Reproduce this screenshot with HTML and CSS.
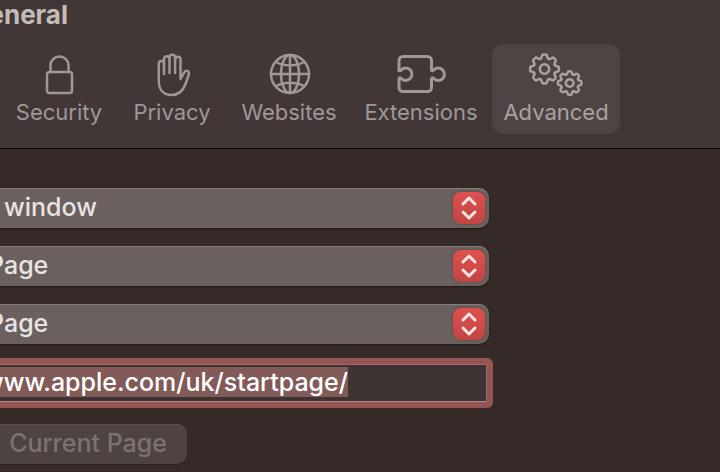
FILE: index.html
```html
<!DOCTYPE html>
<html lang="en">

<head>
    <meta charset="UTF-8">
    <meta name="viewport" content="width=device-width, initial-scale=1.0">
    <title>General</title>
    <link rel="stylesheet" href="styles.css">
</head>

<body>
    <header class="toolbar">
        <h1 class="title">General</h1>
        <nav class="tabs">
            <button class="tab" type="button">
                <svg class="icon" viewBox="0 0 60 48">
                    <rect x="18" y="22" width="25" height="21" rx="2.500" />
                    <path d="M21.500 22v-6.500a9 9 0 0 1 18 0v6.500" />
                </svg>
                <span>Security</span>
            </button>
            <button class="tab" type="button">
                <svg class="icon" viewBox="0 0 60 48">
                    <path d="M22 24V13.500a2.600 2.600 0 0 0-5.200 0V31c0 9 5 14 13 14 7 0 11-4 13.500-10.500l3.500-10c1.200-3.400-3-5-4.400-2.300L38.500 29V9.500a2.600 2.600 0 0 0-5.400 0" />
                    <path d="M22 14V9a2.700 2.700 0 0 1 5.500 0v14M27.500 9V7.500a2.700 2.700 0 0 1 5.600 0V23" />
                </svg>
                <span>Privacy</span>
            </button>
            <button class="tab" type="button">
                <svg class="icon" viewBox="0 0 60 48">
                    <circle cx="31" cy="24" r="19" />
                    <ellipse cx="31" cy="24" rx="9" ry="19" />
                    <path d="M31 5v38M12 24h38M17 12c8 4.500 20 4.500 28 0M17 36c8-4.500 20-4.500 28 0" />
                </svg>
                <span>Websites</span>
            </button>
            <button class="tab" type="button">
                <svg class="icon bold" viewBox="0 0 60 48">
                    <path d="M8 20.500V10.500a4 4 0 0 1 4-4h24.500a4 4 0 0 1 4 4v9q0 2 2 .8a6.200 6.200 0 1 1 0 8q-2-1.200-2 .8V37.500a4 4 0 0 1-4 4H12a4 4 0 0 1-4-4V29q0-2 2-.8a6.200 6.200 0 1 0 0-8q-2 1.200-2-.8" />
                </svg>
                <span>Extensions</span>
            </button>
            <button class="tab active" type="button">
                <svg class="icon" viewBox="0 0 60 48">
                    <defs>
                        <path id="tooth" vector-effect="non-scaling-stroke" d="M-4.200-10.100C-3-10.600-2.900-11.400-2.700-12.600Q-2.400-14.400-1-14.400H1Q2.400-14.400 2.700-12.600C2.900-11.400 3-10.600 4.200-10.100" />
                        <g id="gear">
                            <use href="#tooth" />
                            <use href="#tooth" transform="rotate(45)" />
                            <use href="#tooth" transform="rotate(90)" />
                            <use href="#tooth" transform="rotate(135)" />
                            <use href="#tooth" transform="rotate(180)" />
                            <use href="#tooth" transform="rotate(225)" />
                            <use href="#tooth" transform="rotate(270)" />
                            <use href="#tooth" transform="rotate(315)" />
                            <circle r="4.700" vector-effect="non-scaling-stroke" />
                        </g>
                    </defs>
                    <use href="#gear" transform="translate(18.500 19)" />
                    <use href="#gear" transform="translate(43.700 33) scale(.82)" />
                </svg>
                <span>Advanced</span>
            </button>
        </nav>
    </header>

    <form class="settings">
        <div class="popup">
            <select class="window-select" aria-label="Safari opens with">
                <option>window</option>
            </select>
            <svg class="arrows" viewBox="0 0 32 32">
                <path d="M10 12l6-6 6 6M10 20l6 6 6-6" />
            </svg>
        </div>
        <div class="popup">
            <select aria-label="New windows open with">
                <option>Page</option>
            </select>
            <svg class="arrows" viewBox="0 0 32 32">
                <path d="M10 12l6-6 6 6M10 20l6 6 6-6" />
            </svg>
        </div>
        <div class="popup">
            <select aria-label="New tabs open with">
                <option>Page</option>
            </select>
            <svg class="arrows" viewBox="0 0 32 32">
                <path d="M10 12l6-6 6 6M10 20l6 6 6-6" />
            </svg>
        </div>
        <div class="focus-ring">
            <input class="homepage" id="homepage" type="text" value="www.apple.com/uk/startpage/" aria-label="Homepage" spellcheck="false">
        </div>
        <button class="current" type="button" disabled>Current Page</button>
    </form>

    <script>
        let homepage = document.getElementById('homepage');
        homepage.focus({ preventScroll: true });
        homepage.select();
    </script>
</body>

</html>
```
FILE: styles.css
```css
* {
    box-sizing: border-box;
    margin: 0;
    padding: 0;
}

body {
    min-height: 100vh;
    overflow: clip;
    color: #e8e4e3;
    background: #352a28;
    font-family: Inter, "Liberation Sans", sans-serif;
}

button,
input,
select {
    font-family: inherit;
    border: none;
    outline: none;
}

.toolbar {
    padding-bottom: 14px;
    background: #413736;
    border-bottom: 1px solid #000;
}

.title {
    display: flex;
    justify-content: flex-end;
    width: 68px;
    height: 44px;
    color: #c5bbba;
    font-size: 26px;
    line-height: 30px;
}

.tabs {
    display: grid;
    grid-template-columns: 118px 108px 126px 138px 132px;
}

.tab {
    display: flex;
    flex-direction: column;
    align-items: center;
    height: 90px;
    margin: 0 2px;
    padding-top: 6px;
    color: #9f9897;
    background: none;
    border-radius: 12px;
    font-size: 22px;
    line-height: 28px;
}

.tab.active {
    color: #a9a2a1;
    background: #4e4443;
}

.icon {
    width: 60px;
    height: 48px;
    fill: none;
    stroke: currentColor;
    stroke-width: 2.500px;
    stroke-linecap: round;
    stroke-linejoin: round;
}

.icon.bold {
    stroke-width: 3px;
}

.settings {
    display: flex;
    flex-direction: column;
    align-items: flex-start;
    gap: 18px;
    margin-left: -24px;
    padding-top: 39px;
}

.popup {
    display: grid;
    grid-template-columns: 1fr 32px;
    align-items: center;
    width: 513px;
    height: 40px;
    padding-right: 4px;
    background: #6a615f;
    border-radius: 10px;
    box-shadow: inset 0 1px #867d7b, 0 1px 2px #1c1514;
}

.popup select {
    appearance: none;
    grid-area: 1 / 1 / 2 / 3;
    height: 40px;
    padding: 0 40px 2px 12px;
    color: #e8e4e3;
    background: none;
    font-size: 25px;
    font-weight: 500;
}

.popup .window-select {
    padding-left: 28px;
}

.arrows {
    grid-area: 1 / 2;
    width: 32px;
    height: 32px;
    fill: none;
    stroke: #fbe6e4;
    stroke-width: 3px;
    stroke-linecap: round;
    stroke-linejoin: round;
    background: linear-gradient(#e0504e, #c04543);
    border-radius: 8px;
    box-shadow: 0 0 2px #463c3b;
    pointer-events: none;
}

.focus-ring {
    width: 517px;
    margin: -4px 0 -2px;
    padding: 6px;
    background: #945655;
    border-radius: 6px;
}

.homepage {
    display: block;
    width: 100%;
    height: 38px;
    padding-bottom: 2px;
    color: #fff;
    background: #3d3332;
    border: 1px solid #a66765;
    border-bottom-color: #b08583;
    font-size: 25px;
    font-weight: 500;
    line-height: 32px;
}

.homepage::selection {
    color: #fff;
    background: #825b59;
}

.current {
    width: 211px;
    height: 40px;
    padding: 0 20px 2px 0;
    color: #7c7271;
    background: #4d4341;
    border-radius: 10px;
    box-shadow: inset 0 1px #5b504f, 0 1px 1px #2a2120;
    font-size: 25px;
    font-weight: 500;
    text-align: right;
}
```
